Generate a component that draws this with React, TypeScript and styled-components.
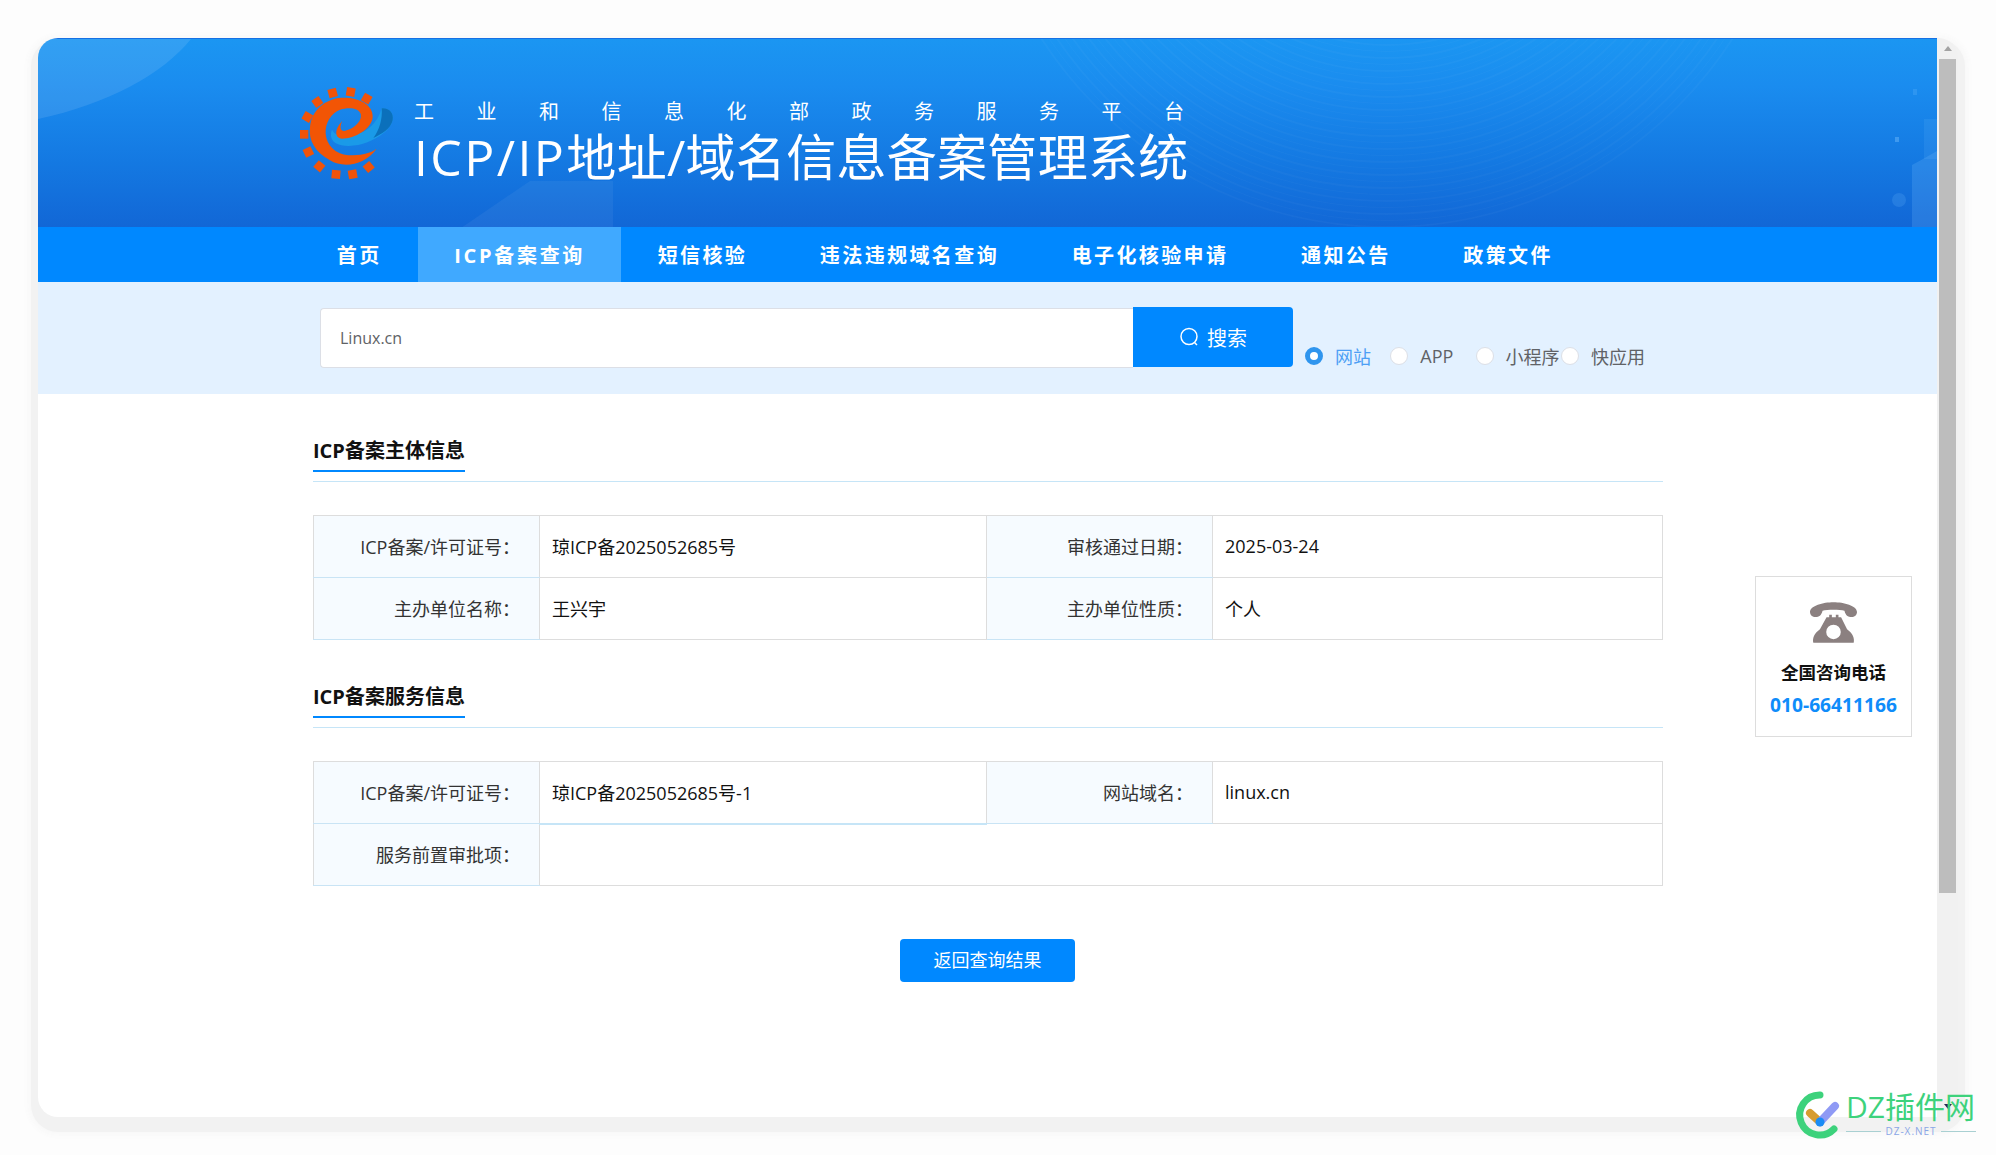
import React from "react";
import styled, { createGlobalStyle } from "styled-components";

const FONT = `"Open Sans", "Noto Sans CJK SC", sans-serif`;

const Global = createGlobalStyle`
  html, body { margin: 0; padding: 0; height: 1155px; overflow: hidden; background: #fdfdfd; }
  body { font-family: ${FONT}; }
  * { box-sizing: border-box; }
`;

const Page = styled.div`
  position: relative;
  width: 1996px;
  height: 1155px;
  padding: 38px 38px 0;
`;

const Frame = styled.div`
  display: flex;
  width: 1920px;
  height: 1079px;
  border-radius: 20px;
  background: #f1f1f1;
  box-shadow: 0 8px 0 7px #f2f2f2, 0 8px 5px 11px #f9f9f9;
`;

const Viewport = styled.div`
  position: relative;
  width: 1899px;
  height: 100%;
  background: #fff;
  border-radius: 20px 0 0 20px;
  overflow: hidden;
`;

const Scrollbar = styled.div`
  width: 21px;
  padding: 0 2px 0 2px;
  display: flex;
  flex-direction: column;
  align-items: stretch;
  position: relative;
`;

const ArrowUp = styled.div`
  height: 21px;
  display: flex;
  align-items: center;
  justify-content: center;
  &::before {
    content: "";
    border-left: 4.5px solid transparent;
    border-right: 4.5px solid transparent;
    border-bottom: 5px solid #a3a3a3;
  }
`;

const Thumb = styled.div`
  height: 834px;
  background: #bdbdbd;
`;

const ArrowDown = styled.div`
  margin-top: auto;
  height: 21px;
  display: flex;
  align-items: center;
  justify-content: center;
  &::before {
    content: "";
    border-left: 4.5px solid transparent;
    border-right: 4.5px solid transparent;
    border-top: 5px solid #2b2550;
  }
`;

const Header = styled.header`
  position: relative;
  height: 189px;
  padding: 48px 0 0 262px;
  display: flex;
  gap: 20px;
  background: linear-gradient(180deg, #1b96f2 0%, #1a8cef 25%, #1479e2 65%, #1267d6 100%);
  border-top: 1px solid #1570e4;
  overflow: hidden;
`;

const HeaderArt = styled.svg`
  position: absolute;
  left: 0;
  top: 0;
  width: 1899px;
  height: 189px;
`;

const LogoMark = styled.svg`
  position: relative;
  width: 94px;
  height: 96px;
  flex: none;
`;

const TitleBlock = styled.div`
  position: relative;
  color: #fff;
  padding-top: 9px;
`;

const Subtitle = styled.div`
  font-size: 20px;
  line-height: 31px;
  letter-spacing: 42.5px;
  white-space: nowrap;
`;

const SiteTitle = styled.h1`
  margin: 0;
  font-size: 50px;
  font-weight: 400;
  line-height: 60px;
  letter-spacing: 0.3px;
  white-space: nowrap;
`;

const TitleLatin = styled.span`
  letter-spacing: 2.4px;
`;

const Nav = styled.nav`
  display: flex;
  height: 55px;
  padding-left: 262.5px;
  background: #0088ff;
`;

const NavItem = styled.a<{ $active?: boolean }>`
  display: flex;
  align-items: center;
  padding: 0 36.3px;
  color: #fff;
  font-size: 20px;
  font-weight: 700;
  letter-spacing: ${(p) => (p.$active ? "2.7px" : "2.4px")};
  white-space: nowrap;
  background: ${(p) => (p.$active ? "#40a9ff" : "transparent")};
`;

const SearchBand = styled.section`
  height: 112px;
  padding: 25px 0 0 282px;
  display: flex;
  align-items: flex-start;
  background: #e3f1ff;
`;

const SearchInput = styled.div`
  width: 813px;
  height: 60px;
  margin-top: 1px;
  padding-left: 19px;
  display: flex;
  align-items: center;
  background: #fff;
  border: 1px solid #dcdfe6;
  border-right: none;
  border-radius: 4px 0 0 4px;
  font-size: 16px;
  color: #606266;
`;

const SearchButton = styled.button`
  width: 160px;
  height: 60px;
  display: flex;
  align-items: center;
  justify-content: center;
  gap: 8px;
  border: none;
  border-radius: 0 4px 4px 0;
  background: #0088ff;
  color: #fff;
  font-family: ${FONT};
  font-size: 20px;
`;

const RadioGroup = styled.div`
  margin: 38px 0 0 12px;
  display: flex;
`;

const RadioItem = styled.label`
  width: 85.3px;
  height: 22px;
  display: flex;
  align-items: center;
  gap: 12px;
  white-space: nowrap;
`;

const RadioDot = styled.span<{ $checked?: boolean }>`
  width: 18px;
  height: 18px;
  flex: none;
  border-radius: 50%;
  background: #fff;
  border: ${(p) => (p.$checked ? "5px solid #2f95ee" : "1px solid #dcdfe6")};
`;

const RadioText = styled.span<{ $checked?: boolean }>`
  font-size: 18px;
  color: ${(p) => (p.$checked ? "#4d9ff5" : "#606266")};
`;

const Content = styled.main`
  width: 1350px;
  margin-left: 275px;
`;

const SectionHead = styled.div<{ $top: number; $height: number }>`
  margin-top: ${(p) => p.$top}px;
  height: ${(p) => p.$height}px;
  border-bottom: 1px solid #c6e5f7;
`;

const SectionTitle = styled.h2`
  display: inline-block;
  margin: 0;
  height: 38px;
  font-size: 20px;
  font-weight: 700;
  line-height: 33px;
  color: #111;
  white-space: nowrap;
  border-bottom: 2px solid #0088ff;
`;

const InfoTable = styled.table`
  width: 1349px;
  margin-top: 33px;
  table-layout: fixed;
  border-collapse: collapse;
  border: 1px solid #dddddd;
`;

const LabelCell = styled.td`
  height: 62px;
  padding: 0 19px 2px 0;
  text-align: right;
  font-size: 18px;
  color: #333;
  background: #f6fbff;
  border: 1px solid #dddddd;
  border-bottom: 1px solid #c9e4f5;
  white-space: nowrap;
`;

const ValueCell = styled.td<{ $accent?: boolean }>`
  height: 62px;
  padding: 0 0 1px 12px;
  font-size: 18px;
  color: #111;
  background: #fff;
  border: 1px solid #dddddd;
  border-bottom: ${(p) => (p.$accent ? "2px solid #c6e5f7" : "1px solid #dddddd")};
  white-space: nowrap;
`;

const BackRow = styled.div`
  display: flex;
  justify-content: center;
  margin: 53px 1px 0 0;
`;

const BackButton = styled.button`
  width: 175px;
  height: 43px;
  padding: 0 0 3px;
  border: none;
  border-radius: 4px;
  background: #0088ff;
  color: #fff;
  font-family: ${FONT};
  font-size: 18px;
`;

const HotlineCard = styled.aside`
  position: absolute;
  left: 1717px;
  top: 538px;
  width: 157px;
  height: 161px;
  padding-top: 25px;
  display: flex;
  flex-direction: column;
  align-items: center;
  background: #fff;
  border: 1px solid #dddddd;
`;

const HotlineLabel = styled.div`
  margin-top: 16px;
  font-size: 17.5px;
  line-height: 26px;
  font-weight: 700;
  color: #111;
  white-space: nowrap;
`;

const HotlineNumber = styled.div`
  margin-top: 7px;
  font-size: 19.2px;
  line-height: 26px;
  font-weight: 700;
  color: #0f8cfa;
  white-space: nowrap;
`;

const Watermark = styled.div`
  position: absolute;
  left: 1793px;
  top: 1089px;
  display: flex;
  gap: 0;
`;

const WatermarkText = styled.div`
  width: 130px;
`;

const WatermarkName = styled.div`
  font-size: 30px;
  line-height: 36px;
  color: #3dd27c;
  white-space: nowrap;
  font-weight: 400;
`;

const WatermarkUrl = styled.div`
  display: flex;
  align-items: center;
  gap: 4px;
  font-size: 10px;
  line-height: 12px;
  letter-spacing: 1px;
  color: #8aa6e6;
  &::before,
  &::after {
    content: "";
    flex: 1;
    height: 1px;
    background: #a9d0d2;
  }
`;

const Gear = () => {
  const teeth: [number, number, number][] = [
    [158, 68, -15], [212, 65, 10], [260, 85, 30], [112, 95, -35], [82, 140, -60],
    [72, 192, -90], [85, 245, -115], [118, 288, -140], [168, 312, -175], [218, 312, 170], [266, 290, 140],
  ];
  return (
    <LogoMark viewBox="60 50 282 288">
      <path d="M305 114 C328 112 342 128 338 150 C332 178 300 200 262 216 C232 228 190 232 166 218 C152 208 150 192 156 178 C166 198 196 204 232 192 C262 182 292 160 305 114Z" fill="#1a9ae8" />
      <path d="M305 114 C328 112 342 128 338 150 C332 176 304 192 280 203 C298 180 308 146 305 114Z" fill="#0b70bb" />
      {teeth.map(([x, y, r]) => (
        <rect key={`${x}-${y}`} x={x - 13} y={y - 13} width={26} height={26} fill="#f0530a" transform={`rotate(${r} ${x} ${y})`} />
      ))}
      <path d="M290 235 C255 285 190 295 150 270 C105 245 85 210 90 170 C95 120 135 85 185 82 C240 80 280 105 278 140 C276 175 225 205 185 205 C163 203 163 175 187 152 C175 175 185 187 200 180 C225 172 248 150 242 130 C235 112 205 110 180 118 C155 128 135 155 137 190 C140 225 165 250 205 255 C240 255 270 250 290 235Z" fill="#f25505" />
    </LogoMark>
  );
};

const PhoneIcon = () => (
  <svg width="47" height="41" viewBox="0 0 142 123">
    <path d="M0 30 C0 10 40 0 71 0 C102 0 142 10 142 30 C142 42 130 48 118 44 C108 41 106 32 104 26 C90 22 52 22 38 26 C36 32 34 41 24 44 C12 48 0 42 0 30Z" fill="#8b8080" />
    <path fillRule="evenodd" d="M50 46 L58 46 L58 38 L66 38 L66 46 L78 46 L78 38 L86 38 L86 46 L94 46 L112 82 C130 95 135 110 132 123 L10 123 C7 110 12 95 30 82 Z M71 68 A22 22 0 1 0 71 112 A22 22 0 1 0 71 68Z" fill="#8b8080" />
  </svg>
);

const WatermarkLogo = () => (
  <svg width="53" height="54" viewBox="0 0 53 54">
    <path d="M27 6 A20 20 0 1 0 41 40" fill="none" stroke="#3dd27c" strokeWidth="7" strokeLinecap="round" />
    <path d="M17 24 L27 33" stroke="#d69c30" strokeWidth="8" strokeLinecap="round" />
    <path d="M27 33 L42 17" stroke="#8f9af5" strokeWidth="8" strokeLinecap="round" />
    <circle cx="27" cy="33" r="4.5" fill="#1a8cf5" />
  </svg>
);

const arcs = Array.from({ length: 56 }, (_, i) => 411 - i * 6.5);

const InfoRow = ({ cells }: { cells: [string, string][] }) => (
  <tr>
    {cells.map(([label, value]) => (
      <React.Fragment key={label}>
        <LabelCell>{label}</LabelCell>
        <ValueCell>{value}</ValueCell>
      </React.Fragment>
    ))}
  </tr>
);

const ColWidths = () => (
  <colgroup>
    <col style={{ width: 226 }} />
    <col style={{ width: 447 }} />
    <col style={{ width: 226 }} />
    <col style={{ width: 450 }} />
  </colgroup>
);

const navItems = ["首页", "ICP备案查询", "短信核验", "违法违规域名查询", "电子化核验申请", "通知公告", "政策文件"];
const radios = ["网站", "APP", "小程序", "快应用"];

export default function App() {
  return (
    <Page>
      <Global />
      <Frame>
        <Viewport>
          <Header>
            <HeaderArt viewBox="0 0 1899 189">
              <path d="M0 0 H153 C125 35 70 65 0 80Z" fill="#fff" opacity="0.1" />
              <path d="M423 189 L492 142 H575 V189Z" fill="#fff" opacity="0.05" />
              {arcs.map((r, i) => (
                <circle key={r} cx="1349" cy="-223" r={r} fill="none" stroke="#fff" strokeWidth={i % 2 ? 1 : 2} opacity="0.028" />
              ))}
              <path d="M1885 120 L1899 112 V189 H1874 V126Z" fill="#7cc4ff" opacity="0.2" />
              <rect x="1886" y="80" width="13" height="40" fill="#7cc4ff" opacity="0.12" />
              <rect x="1857" y="98" width="4" height="5" fill="#7cc4ff" opacity="0.4" />
              <circle cx="1861" cy="161" r="7" fill="#7cc4ff" opacity="0.18" />
              <rect x="1875" y="50" width="4" height="6" fill="#7cc4ff" opacity="0.2" />
            </HeaderArt>
            <Gear />
            <TitleBlock>
              <Subtitle>工业和信息化部政务服务平台</Subtitle>
              <SiteTitle><TitleLatin>ICP/IP</TitleLatin>地址/域名信息备案管理系统</SiteTitle>
            </TitleBlock>
          </Header>
          <Nav>
            {navItems.map((n, i) => (
              <NavItem key={n} $active={i === 1}>{n}</NavItem>
            ))}
          </Nav>
          <SearchBand>
            <SearchInput>Linux.cn</SearchInput>
            <SearchButton>
              <svg width="20" height="20" viewBox="0 0 20 20" fill="none" stroke="#fff" strokeWidth="1.5">
                <circle cx="10" cy="9.5" r="8" />
                <path d="M15.5 15.5 L18 18" />
              </svg>
              搜索
            </SearchButton>
            <RadioGroup>
              {radios.map((r, i) => (
                <RadioItem key={r}>
                  <RadioDot $checked={i === 0} />
                  <RadioText $checked={i === 0}>{r}</RadioText>
                </RadioItem>
              ))}
            </RadioGroup>
          </SearchBand>
          <Content>
            <SectionHead $top={40} $height={48}>
              <SectionTitle>ICP备案主体信息</SectionTitle>
            </SectionHead>
            <InfoTable>
              <ColWidths />
              <tbody>
                <InfoRow cells={[["ICP备案/许可证号：", "琼ICP备2025052685号"], ["审核通过日期：", "2025-03-24"]]} />
                <InfoRow cells={[["主办单位名称：", "王兴宇"], ["主办单位性质：", "个人"]]} />
              </tbody>
            </InfoTable>
            <SectionHead $top={40} $height={48}>
              <SectionTitle>ICP备案服务信息</SectionTitle>
            </SectionHead>
            <InfoTable>
              <ColWidths />
              <tbody>
                <tr>
                  <LabelCell>ICP备案/许可证号：</LabelCell>
                  <ValueCell $accent>琼ICP备2025052685号-1</ValueCell>
                  <LabelCell>网站域名：</LabelCell>
                  <ValueCell>linux.cn</ValueCell>
                </tr>
                <tr>
                  <LabelCell>服务前置审批项：</LabelCell>
                  <ValueCell colSpan={3} />
                </tr>
              </tbody>
            </InfoTable>
            <BackRow>
              <BackButton>返回查询结果</BackButton>
            </BackRow>
          </Content>
          <HotlineCard>
            <PhoneIcon />
            <HotlineLabel>全国咨询电话</HotlineLabel>
            <HotlineNumber>010-66411166</HotlineNumber>
          </HotlineCard>
        </Viewport>
        <Scrollbar>
          <ArrowUp />
          <Thumb />
          <ArrowDown />
        </Scrollbar>
      </Frame>
      <Watermark>
        <WatermarkLogo />
        <WatermarkText>
          <WatermarkName>DZ插件网</WatermarkName>
          <WatermarkUrl>DZ-X.NET</WatermarkUrl>
        </WatermarkText>
      </Watermark>
    </Page>
  );
}
